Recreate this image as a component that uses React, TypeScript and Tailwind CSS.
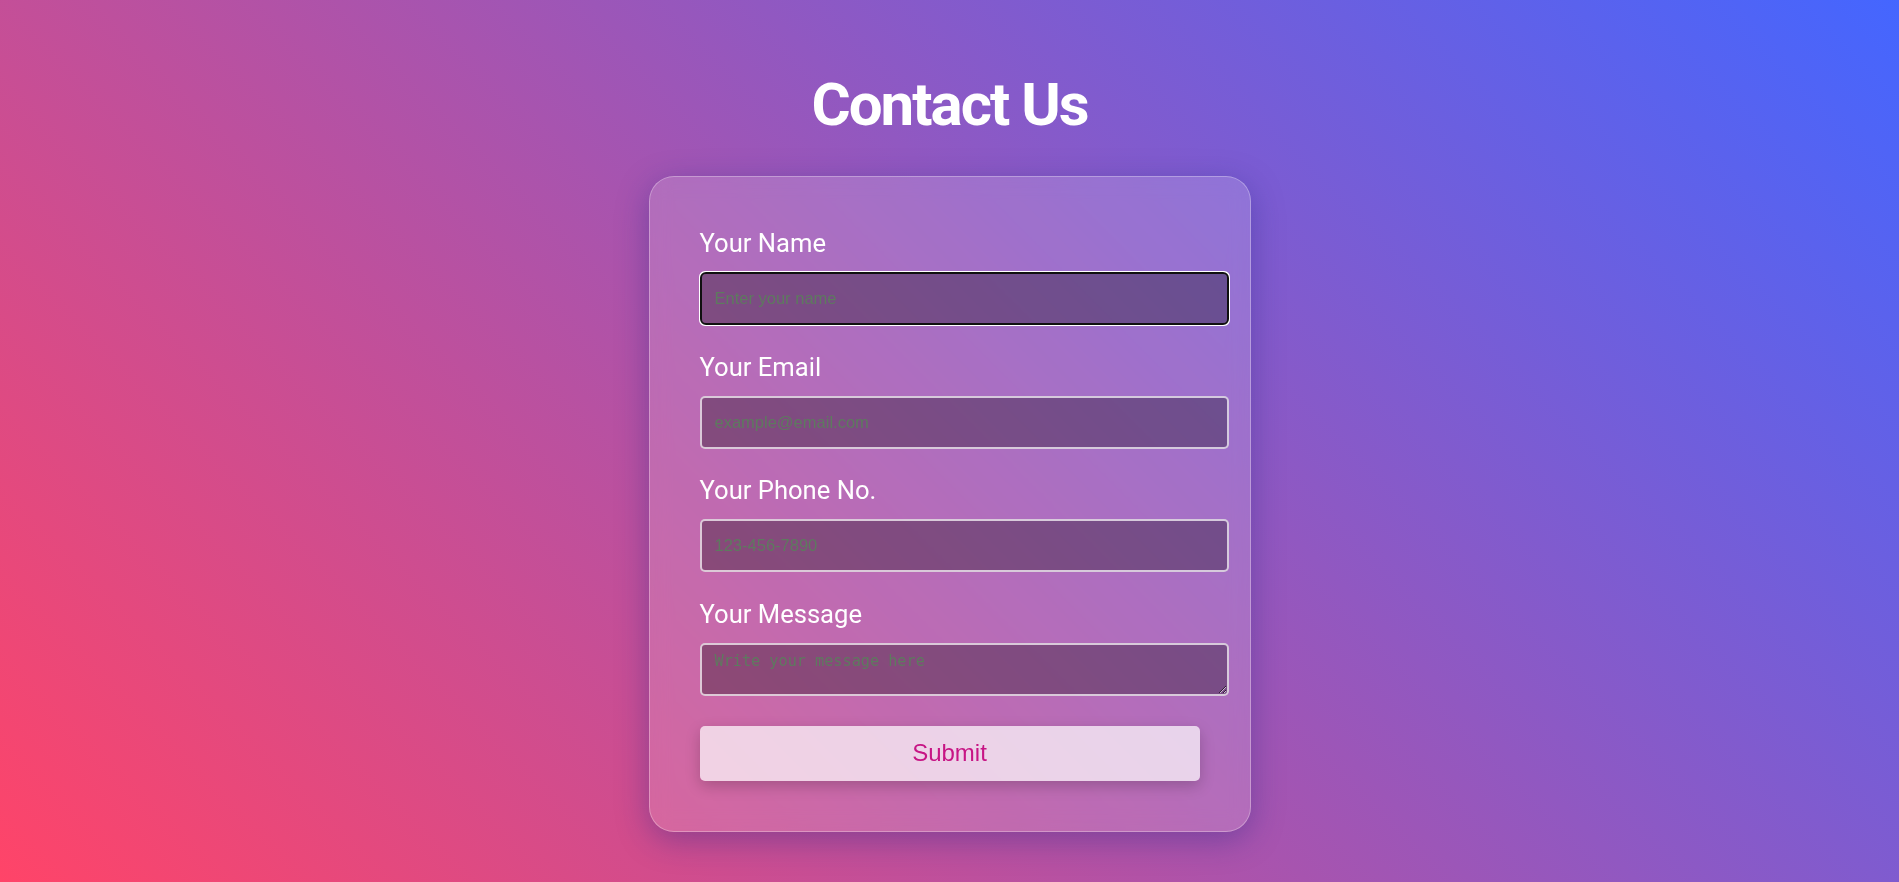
import { useState } from "react";

type Field = {
  id: string;
  label: string;
  type: string;
  placeholder: string;
};

const fields: Field[] = [
  { id: "name", label: "Your Name", type: "text", placeholder: "Enter your name" },
  { id: "email", label: "Your Email", type: "email", placeholder: "example@email.com" },
  { id: "phone", label: "Your Phone No.", type: "tel", placeholder: "123-456-7890" },
];

export default function App() {
  const [values, setValues] = useState<Record<string, string>>({});

  const update = (id: string, v: string) => setValues((prev) => ({ ...prev, [id]: v }));

  return (
    <div className="min-h-screen bg-[linear-gradient(45deg,#ff4468,#4466ff)] flex flex-col items-center pt-[70px] font-['Roboto',sans-serif]">
      <h1 className="text-[60px] leading-[70px] font-bold tracking-[-2px] text-white">Contact Us</h1>

      <form
        onSubmit={(e) => e.preventDefault()}
        className="mt-[36px] w-[602px] rounded-[25px] border border-white/30 bg-white/15 backdrop-blur-[10px] px-[50px] pt-[51px] pb-[50px] shadow-[0_8px_32px_rgba(31,38,135,0.37)]"
      >
        {fields.map((f, i) => (
          <div key={f.id} className="mb-[26.5px]">
            <label htmlFor={f.id} className="block text-[25.6px] leading-[30px] mb-[14px] text-white">
              {f.label}
            </label>
            <input
              id={f.id}
              type={f.type}
              autoFocus={i === 0}
              value={values[f.id] ?? ""}
              onChange={(e) => update(f.id, e.target.value)}
              placeholder={f.placeholder}
              className="block w-[529px] max-w-none h-[53px] px-[13px] rounded-[5px] border-2 border-white/70 bg-black/30 text-white text-[16.5px] font-['Liberation_Sans',Arial,sans-serif] placeholder:text-[#5e7a5f]"
            />
          </div>
        ))}

        <div className="mb-[30px]">
          <label htmlFor="message" className="block text-[25.6px] leading-[30px] mb-[14px] text-white">
            Your Message
          </label>
          <textarea
            id="message"
            value={values.message ?? ""}
            onChange={(e) => update("message", e.target.value)}
            placeholder="Write your message here"
            className="block w-[529px] max-w-none h-[53px] px-[13px] pt-[5px] rounded-[5px] border-2 border-white/70 bg-black/30 text-white text-[15.2px] leading-normal font-['DejaVu_Sans_Mono',monospace] placeholder:text-[#5e7a5f]"
          />
        </div>

        <button
          type="submit"
          className="block w-[500px] h-[55px] rounded-[5px] bg-white/70 text-[#c71585] text-[24px] font-['Liberation_Sans',Arial,sans-serif] shadow-[0_5px_15px_rgba(0,0,0,0.2)]"
        >
          Submit
        </button>
      </form>
    </div>
  );
}
